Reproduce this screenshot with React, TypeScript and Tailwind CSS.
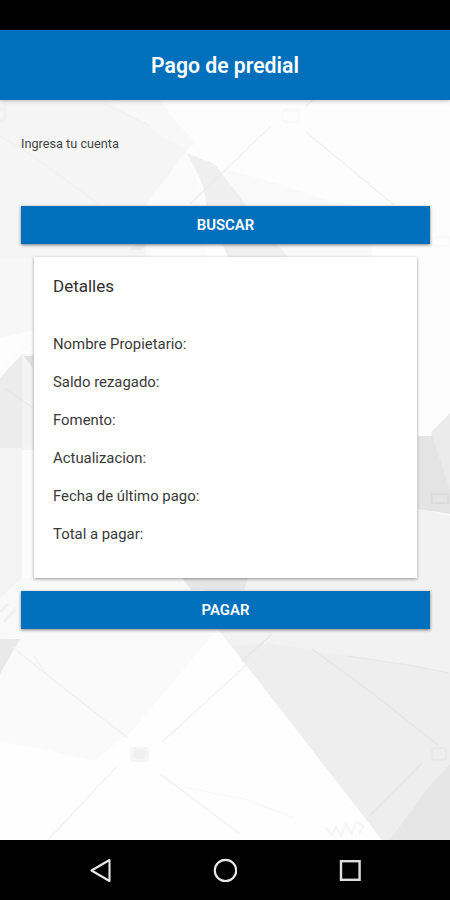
import { type ReactElement } from 'react'

const DETAIL_LABELS = [
  'Nombre Propietario:',
  'Saldo rezagado:',
  'Fomento:',
  'Actualizacion:',
  'Fecha de último pago:',
  'Total a pagar:'
]

// Faceted paper-like backdrop behind the form
function Backdrop(): ReactElement {
  return (
    <svg
      className="absolute inset-0 h-full w-full"
      viewBox="0 100 450 740"
      preserveAspectRatio="none"
      fill="none"
      aria-hidden
    >
      <path fill="#fdfdfd" d="M0 100h450v740H0z" />
      <path fill="#f5f5f5" d="M0 100h108l50 24 30 25-42 56v55H0z" />
      <path fill="#f8f8f8" d="M108 100h52l14 20 22 23-9 6-29-15z" />
      <path fill="#f7f7f7" d="M0 258h34v72L0 338z" />
      <path fill="#fbfbfb" d="M187 152l-41 53v55h60v-50z" />
      <path fill="#f9f9f9" d="M222 168l50 14 60 20 40 6v52h-100z" />
      <path fill="#efefef" d="M187 153l17 7q8 1 12 6l12 15 18 24 42 52h-60l-22-52q-1-20-10-34z" />
      <path fill="#ececec" d="M136 244h10l-4 6h-14z" />
      <path fill="#f4f4f4" d="M0 378l22-24h12v224H0z" />
      <path fill="#ececec" d="M0 378l22-24v94H0z" />
      <path fill="#f3f3f3" d="M22 356h12v90H22z" />
      <path fill="#e0e0e0" d="M24 356h9v12z" />
      <path fill="#fcfcfc" d="M22 450h12v142H22z" />
      <path fill="#f3f3f3" d="M0 448h22v130L0 598z" />
      <path fill="#f9f9f9" d="M0 598l22-20v62H0z" />
      <path fill="#f2f2f2" d="M418 508l32 8v156l-102-16-122-27-30-51h222z" />
      <path fill="#e4e4e4" d="M418 436h13l19-18v96l-32-5z" />
      <path fill="#ebebeb" d="M431 432l19-19v77z" />
      <path fill="#e6e6e6" d="M182 578h66l-4 12h-54z" />
      <path fill="#f9f9f9" d="M22 578h160l10 13 28 38H20v-38z" />
      <path fill="#fafafa" d="M21 629h197l-86 105-30 31-62-17-40-7V639z" />
      <path fill="#fefefe" d="M218 629l27 33 137 178H0v-99l94 20 38-30z" />
      <path fill="#e9e9e9" d="M0 639h20L0 674z" />
      <path fill="#eeeeee" d="M218 629l50 14 50 7 64 11 68 12v167h-68z" />
      <path fill="#f2f2f2" d="M218 629h232v43l-102-16-80-13-36 3z" />
      <path fill="#e6e6e6" d="M450 764l-23 25-37 51h60z" />
      <g stroke="#f0f0f0" strokeWidth="1.2">
        <path d="M0 136l30 18 70 51M105 104l45 22M271 126l-81 78M306 132l88 73M306 106l7-6" />
        <path d="M12 647l58 46 58 45M34 656l14 20M162 742l112-102M116 767l-68 73M160 774l79 59" />
        <path stroke="#f7f7f7" d="M188 788l60 12 46 18" />
      </g>
      <path stroke="#e9e9e9" d="M222 173l-32 31" />
      <path stroke="#e4e4e4" d="M4 388l29 20" />
      <path stroke="#fbfbfb" strokeWidth="2" d="M4 366l16-13 14-13" />
      <path stroke="#e5e5e5" strokeWidth="1.2" d="M312 649l60 44 66 52M422 763l-53 53M348 656l66 10 36 7M272 634l-30 27" />
      <g stroke="#f9f9f9" strokeWidth="3">
        <rect x="282" y="110" width="17" height="12" rx="4" />
        <rect x="432" y="237" width="18" height="9" rx="3" />
        <path stroke="#f1f1f1" d="M0 612l8-8M4 622l12-14M0 110l5-4v12l-5 4" />
      </g>
      <rect x="130" y="747" width="19" height="15" rx="4" fill="#f5f5f5" />
      <rect x="134" y="750" width="11" height="9" rx="3" fill="#efefef" />
      <rect x="432" y="748" width="14" height="12" rx="3" stroke="#e9e9e9" strokeWidth="2" />
      <rect x="432" y="494" width="16" height="9" stroke="#dcdcdc" strokeWidth="2" />
      <path d="M326 828l6 7 4-8 5 9 5-12 6 10 4-12 8 4-5 8" stroke="#f5f5f5" strokeWidth="2" />
    </svg>
  )
}

function ActionButton({ label }: { label: string }): ReactElement {
  return (
    <button
      type="button"
      className="flex h-[38px] w-full shrink-0 items-center justify-center bg-[#0070bd] pb-px text-[14.9px] leading-5 font-semibold text-white shadow-[0_1px_3px_rgba(0,0,0,0.5)]"
    >
      {label}
    </button>
  )
}

function NavigationBar(): ReactElement {
  return (
    <nav className="flex h-[60px] shrink-0 items-center justify-between bg-black px-[88px]">
      <svg className="h-6 w-6" viewBox="0 0 24 24" fill="none" stroke="#e8e8e8" strokeWidth="2.1" strokeLinejoin="round">
        <path d="M21.5 2L3.5 12.5L21.5 23Z" />
      </svg>
      <svg className="h-6 w-6" viewBox="0 0 24 24" fill="none" stroke="#e8e8e8" strokeWidth="2.2">
        <circle cx="12.5" cy="12.5" r="10.7" />
      </svg>
      <svg className="h-6 w-6" viewBox="0 0 24 24" fill="none" stroke="#dedede" strokeWidth="2.4">
        <rect x="3" y="3.2" width="18.6" height="18.6" />
      </svg>
    </nav>
  )
}

export default function App(): ReactElement {
  return (
    <div className="flex h-[900px] w-[450px] flex-col overflow-hidden bg-black font-[Roboto,sans-serif]">
      <div className="h-[30px] shrink-0 bg-black" />
      <header className="relative z-10 flex h-[70px] shrink-0 items-center justify-center bg-[#0070bd] pt-[2px] shadow-[0_1px_4px_rgba(0,0,0,0.25)]">
        <h1 className="text-[21.2px] leading-7 font-semibold text-white">Pago de predial</h1>
      </header>
      <main className="relative h-[740px] shrink-0">
        <Backdrop />
        <div className="relative flex flex-col pr-[20px] pl-[21px]">
          <label className="pt-[36px] text-[12.7px] leading-4 text-[#444]">Ingresa tu cuenta</label>
          <div className="h-[54px]" />
          <ActionButton label="BUSCAR" />
          <section className="mx-[13px] my-[13px] h-[321px] bg-white pt-[19px] pl-[19px] shadow-[0_1px_3px_rgba(0,0,0,0.4)]">
            <h2 className="text-[17px] leading-5 text-[#303030]">Detalles</h2>
            <ul className="mt-[29px]">
              {DETAIL_LABELS.map((label) => (
                <li key={label} className="flex h-[38px] items-center text-[14.9px] text-[#3a3a3a]">
                  {label}
                </li>
              ))}
            </ul>
          </section>
          <ActionButton label="PAGAR" />
        </div>
      </main>
      <NavigationBar />
    </div>
  )
}
